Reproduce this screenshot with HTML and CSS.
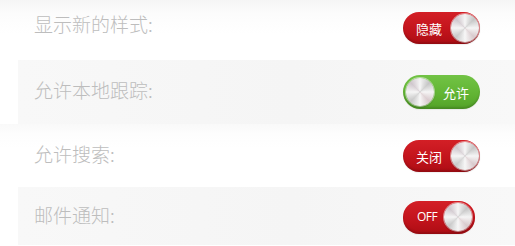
FILE: index.html
```html
<!DOCTYPE html>
<html>
<head>
<meta charset="utf-8">
<link rel="stylesheet" href="styles.css">
</head>
<body>
<div class="list">
  <div class="row row-a first">
    <span class="label">显示新的样式:</span>
    <div class="slot"><div class="toggle off"><span class="txt">隐藏</span><span class="knob"></span></div></div>
  </div>
  <div class="row row-b">
    <span class="label">允许本地跟踪:</span>
    <div class="slot"><div class="toggle on"><span class="knob"></span><span class="txt">允许</span></div></div>
  </div>
  <div class="row row-a">
    <span class="label">允许搜索:</span>
    <div class="slot"><div class="toggle off"><span class="txt">关闭</span><span class="knob"></span></div></div>
  </div>
  <div class="row row-b last">
    <span class="label">邮件通知:</span>
    <div class="slot"><div class="toggle off small"><span class="txt en">OFF</span><span class="knob"></span></div></div>
  </div>
</div>
</body>
</html>
```
FILE: styles.css
```css
html, body {
  margin: 0;
  padding: 0;
  background: #ffffff;
}
body {
  width: 515px;
  height: 246px;
  overflow: hidden;
  font-family: "Noto Sans CJK SC", "Noto Sans", sans-serif;
}
.list {
  display: flex;
  flex-direction: column;
}
.row {
  display: flex;
  align-items: center;
  justify-content: space-between;
  height: 64px;
  box-sizing: border-box;
}
.row-a {
  padding: 0 35px 0 34px;
  background: linear-gradient(to bottom, #f9f9f9 0px, #fdfdfd 10px, #ffffff 24px);
}
.row-a.first {
  height: 60px;
  padding-bottom: 4px;
  background: linear-gradient(to bottom, #f5f5f5 0px, #fcfcfc 14px, #ffffff 34px);
}
.row-b {
  margin-left: 18px;
  padding: 0 35px 0 16px;
  background: linear-gradient(to right, #f8f8f8 0%, #f5f5f5 55%, #f8f8f8 100%);
}
.row-b.last {
  height: 58px;
  margin-top: -1px;
  padding-top: 2px;
}
.label {
  font-size: 19px;
  color: #bdbdbd;
  font-weight: 300;
  line-height: 1;
  margin-bottom: 6px;
}
.first .label {
  margin-bottom: 10px;
}
.slot {
  width: 77px;
  display: flex;
}
.toggle {
  width: 77px;
  height: 32px;
  border-radius: 16px;
  box-sizing: border-box;
  display: flex;
  align-items: center;
  padding: 0 3px 0 13px;
  gap: 9px;
  box-shadow: inset 0 -2px 2px rgba(0,0,0,0.15), 0 1px 1px rgba(0,0,0,0.06);
}
.toggle.off {
  background: linear-gradient(to bottom, #d31f26 0%, #c3141c 55%, #ad0d14 100%);
}
.toggle.on {
  height: 34px;
  border-radius: 17px;
  padding: 0 13px 0 3px;
  background: linear-gradient(to bottom, #72c345 0%, #62b534 55%, #53a228 100%);
}
.toggle.small {
  width: 72px;
  height: 33px;
  padding-left: 14px;
  gap: 7px;
}
.txt {
  color: #ffffff;
  font-size: 13px;
  line-height: 1;
  white-space: nowrap;
}
.txt.en {
  font-family: "Open Sans", "Noto Sans", sans-serif;
  font-size: 12px;
  letter-spacing: -0.5px;
}
.knob {
  width: 28px;
  height: 28px;
  border-radius: 50%;
  flex: none;
  background:
    radial-gradient(circle, rgba(255,255,255,0.3) 0 20%, transparent 60%),
    conic-gradient(from 0deg, #f4f4f4, #c5c5c5 45deg, #f4f4f4 90deg, #d8c9cc 135deg, #f6f6f6 180deg, #c8c8c8 225deg, #f4f4f4 270deg, #cfc6cc 315deg, #f4f4f4);
  box-shadow: 0 0 0 1px rgba(255,255,255,0.5), 0 1px 2px rgba(0,0,0,0.3);
}
```
